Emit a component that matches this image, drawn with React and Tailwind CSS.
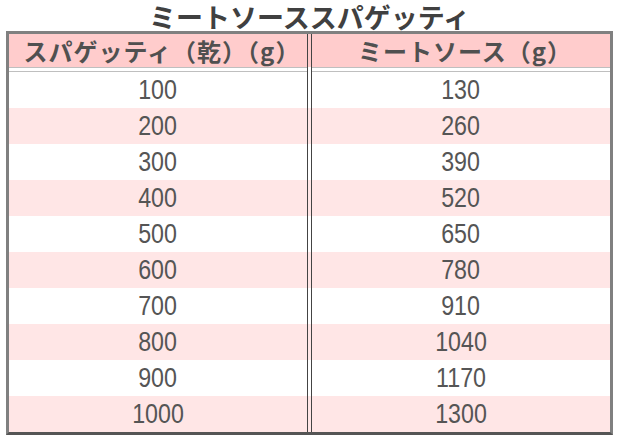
import React from "react";

const rows = [
  [100, 130],
  [200, 260],
  [300, 390],
  [400, 520],
  [500, 650],
  [600, 780],
  [700, 910],
  [800, 1040],
  [900, 1170],
  [1000, 1300],
];

const jp = { fontFamily: '"Noto Sans CJK JP", "Noto Sans", sans-serif' };
const num = { fontFamily: '"Liberation Sans", Arial, sans-serif' };

function Num({ value }) {
  return (
    <div className="flex-1 flex items-center justify-center">
      <span className="inline-block text-[27px] leading-none text-[#555555] scale-x-[0.86]" style={num}>
        {value}
      </span>
    </div>
  );
}

export default function App() {
  return (
    <div className="w-[619px] h-[440px] bg-white pl-[6px]">
      <div className="w-[607px]">
        <h1 className="h-[31px] text-center text-[27px] font-bold text-[#404040] leading-[31px] pt-[1px]" style={jp}>
          ミートソーススパゲッティ
        </h1>
        <div className="border-[3px] border-[#808080] border-b-[#555555]">
          <div className="flex h-[33px] bg-[#ffcccc]">
            <div className="flex-1 flex items-center justify-center text-[24px] font-bold text-[#505050] leading-none tracking-[1px] pl-[8px]" style={jp}>
              スパゲッティ（乾）（g）
            </div>
            <div className="w-[5px] border-x border-[#444444]"></div>
            <div className="flex-1 flex items-center justify-center text-[24px] font-bold text-[#505050] leading-none tracking-[1px] pl-[8px]" style={jp}>
              ミートソース（g）
            </div>
          </div>
          <div className="flex h-[5px] bg-white">
            <div className="flex-1 border-y border-[#bfbfbf]"></div>
            <div className="w-[5px] border-x border-[#444444]"></div>
            <div className="flex-1 border-y border-[#bfbfbf]"></div>
          </div>
          {rows.map(([a, b], i) => (
            <div key={i} className={`flex h-9 ${i % 2 === 1 ? "bg-[#ffe6e6]" : "bg-white"}`}>
              <Num value={a} />
              <div className="w-[5px] border-x border-[#444444]"></div>
              <Num value={b} />
            </div>
          ))}
        </div>
      </div>
    </div>
  );
}
